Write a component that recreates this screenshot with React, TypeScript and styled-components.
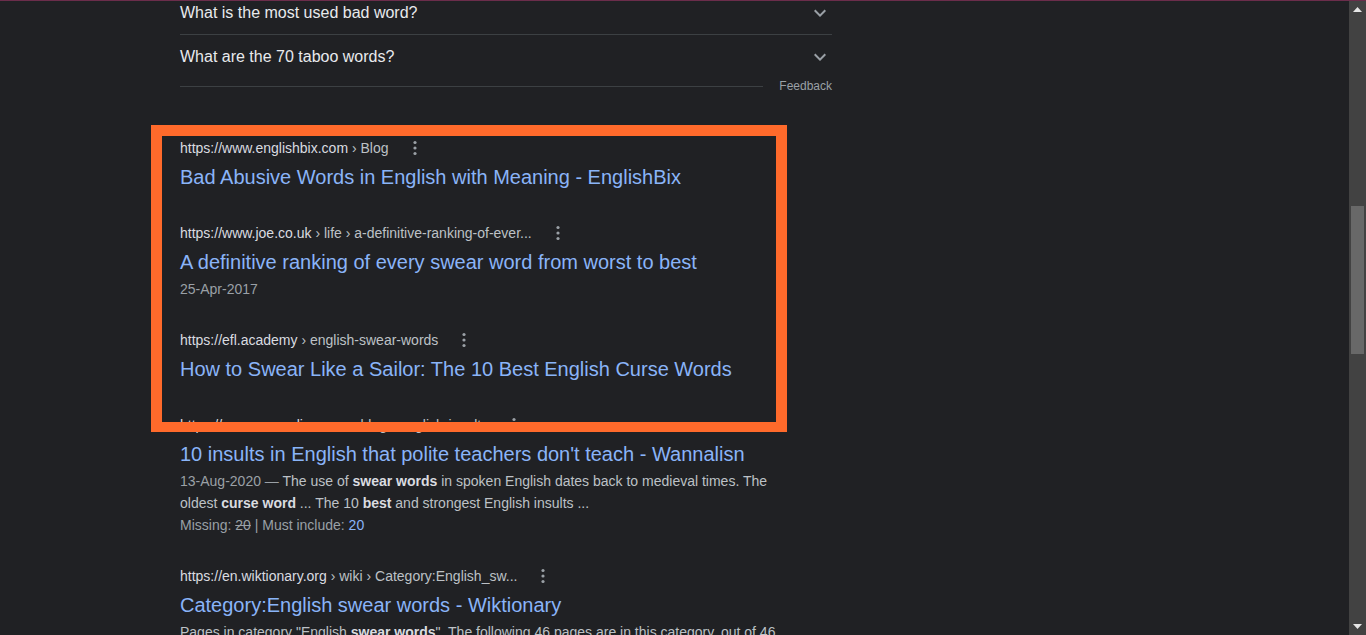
import React from "react";
import styled, { createGlobalStyle } from "styled-components";

const GlobalStyle = createGlobalStyle`
  html, body {
    margin: 0;
    padding: 0;
    background: #202124;
    overflow: hidden;
  }
  body {
    font-family: "Liberation Sans", Arial, sans-serif;
  }
`;

const Page = styled.div`
  display: flex;
  height: 635px;
  box-sizing: border-box;
  border-top: 1px solid #6b2d4b;
  background: #202124;
  overflow: hidden;
`;

const Main = styled.div`
  position: relative;
  flex: 1;
  overflow: hidden;
`;

const Column = styled.div`
  width: 652px;
  margin: -10px 0 0 180px;
`;

const FaqRow = styled.div<{ $divider?: boolean }>`
  display: flex;
  align-items: center;
  justify-content: space-between;
  height: 43px;
  border-bottom: ${(p) => (p.$divider ? "1px solid #3c4043" : "none")};
  color: #e8eaed;
  font-size: 16px;
`;

const Chevron = styled.svg`
  width: 24px;
  height: 24px;
  fill: #9aa0a6;
  flex-shrink: 0;
`;

const FeedbackRow = styled.div`
  display: flex;
  align-items: center;
  height: 16px;
`;

const Rule = styled.div`
  flex: 1;
  height: 1px;
  background: #3c4043;
`;

const FeedbackLink = styled.span`
  margin-left: 16px;
  font-size: 12px;
  color: #9aa0a6;
`;

const Results = styled.div`
  margin-top: 43px;
  width: 600px;
`;

const Result = styled.div`
  padding-bottom: 29px;
`;

const UrlRow = styled.div`
  display: flex;
  align-items: center;
  height: 22px;
  font-size: 14px;
  white-space: nowrap;
`;

const Domain = styled.span`
  color: #dadce0;
`;

const Crumbs = styled.span`
  color: #bdc1c6;
`;

const Dots = styled.svg`
  width: 12px;
  height: 18px;
  margin-left: 20px;
  fill: #9aa0a6;
`;

const Title = styled.h3`
  margin: 0;
  padding: 5px 0 3px;
  font-size: 20px;
  line-height: 26px;
  font-weight: normal;
  color: #8ab4f8;
  white-space: nowrap;
`;

const Snippet = styled.div`
  font-size: 14px;
  line-height: 22px;
  color: #bdc1c6;
`;

const Muted = styled.span`
  color: #9aa0a6;
`;

const Em = styled.b`
  color: #dadce0;
`;

const Struck = styled.span`
  text-decoration: line-through;
`;

const InlineLink = styled.span`
  color: #8ab4f8;
`;

const Highlight = styled.div`
  position: absolute;
  left: 151px;
  top: 124px;
  width: 636px;
  height: 307px;
  box-sizing: border-box;
  border: 11px solid #ff6a2b;
  border-bottom-width: 10px;
  pointer-events: none;
`;

const Scrollbar = styled.div`
  display: flex;
  flex-direction: column;
  width: 17px;
  background: #424242;
`;

const ScrollArrow = styled.div`
  display: flex;
  align-items: center;
  justify-content: center;
  height: 17px;
`;

const Track = styled.div`
  flex: 1;
  padding: 0 2px;
`;

const Thumb = styled.div<{ $top: number; $height: number }>`
  margin-top: ${(p) => p.$top}px;
  height: ${(p) => p.$height}px;
  background: #686868;
`;

const ExpandMore = () => (
  <Chevron viewBox="0 0 24 24">
    <path d="M16.59 8.59L12 13.17 7.41 8.59 6 10l6 6 6-6z" />
  </Chevron>
);

const MoreDots = () => (
  <Dots viewBox="0 0 12 18">
    <circle cx="6" cy="3.5" r="1.6" />
    <circle cx="6" cy="9" r="1.6" />
    <circle cx="6" cy="14.5" r="1.6" />
  </Dots>
);

const Cite = ({ domain, path }: { domain: string; path: string }) => (
  <UrlRow>
    <span>
      <Domain>{domain}</Domain>
      <Crumbs>{` › ${path}`}</Crumbs>
    </span>
    <MoreDots />
  </UrlRow>
);

const App = (): JSX.Element => {
  return (
    <React.Fragment>
      <GlobalStyle />
      <Page>
        <Main>
          <Column>
            <FaqRow $divider>
              <span>What is the most used bad word?</span>
              <ExpandMore />
            </FaqRow>
            <FaqRow>
              <span>What are the 70 taboo words?</span>
              <ExpandMore />
            </FaqRow>
            <FeedbackRow>
              <Rule />
              <FeedbackLink>Feedback</FeedbackLink>
            </FeedbackRow>

            <Results>
              <Result>
                <Cite domain="https://www.englishbix.com" path="Blog" />
                <Title>Bad Abusive Words in English with Meaning - EnglishBix</Title>
              </Result>

              <Result>
                <Cite domain="https://www.joe.co.uk" path="life › a-definitive-ranking-of-ever..." />
                <Title>A definitive ranking of every swear word from worst to best</Title>
                <Snippet>
                  <Muted>25-Apr-2017</Muted>
                </Snippet>
              </Result>

              <Result>
                <Cite domain="https://efl.academy" path="english-swear-words" />
                <Title>How to Swear Like a Sailor: The 10 Best English Curse Words</Title>
              </Result>

              <Result>
                <Cite domain="https://www.wannalisn.com" path="blog › english-insults" />
                <Title>10 insults in English that polite teachers don't teach - Wannalisn</Title>
                <Snippet>
                  <Muted>13-Aug-2020 — </Muted>The use of <Em>swear words</Em> in spoken English dates back to
                  medieval times. The oldest <Em>curse word</Em> ... The 10 <Em>best</Em> and strongest English
                  insults ...
                </Snippet>
                <Snippet>
                  <Muted>
                    Missing: <Struck>20</Struck> | Must include: <InlineLink>20</InlineLink>
                  </Muted>
                </Snippet>
              </Result>

              <Result>
                <Cite domain="https://en.wiktionary.org" path="wiki › Category:English_sw..." />
                <Title>Category:English swear words - Wiktionary</Title>
                <Snippet>
                  Pages in category "English <Em>swear words</Em>". The following 46 pages are in this category, out
                  of 46 total.
                </Snippet>
              </Result>
            </Results>
          </Column>
          <Highlight />
        </Main>

        <Scrollbar>
          <ScrollArrow>
            <svg width="9" height="5" viewBox="0 0 9 5">
              <path d="M0 5 L4.5 0 L9 5 Z" fill="#e6e6e6" />
            </svg>
          </ScrollArrow>
          <Track>
            <Thumb $top={188} $height={148} />
          </Track>
          <ScrollArrow>
            <svg width="9" height="5" viewBox="0 0 9 5">
              <path d="M0 0 L9 0 L4.5 5 Z" fill="#e6e6e6" />
            </svg>
          </ScrollArrow>
        </Scrollbar>
      </Page>
    </React.Fragment>
  );
};

export default App;
